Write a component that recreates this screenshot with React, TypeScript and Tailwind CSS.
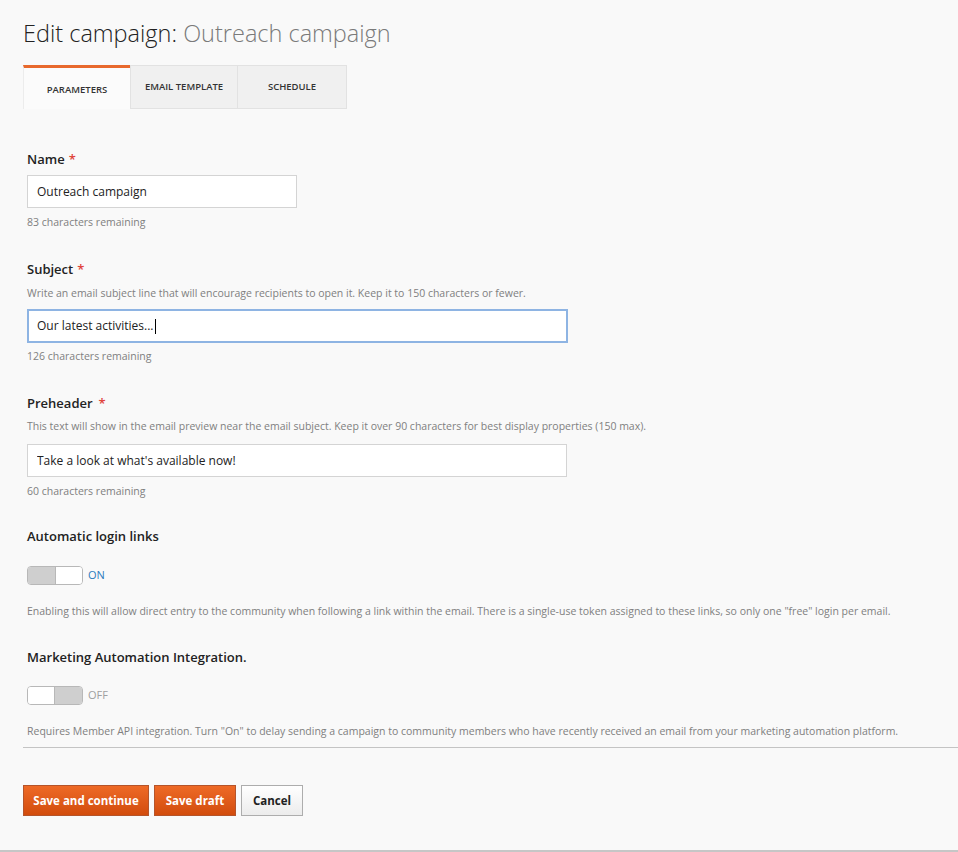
const font = { fontFamily: '"Open Sans", "Noto Sans", sans-serif' }

function Label({ text, gap = false }: { text: string; gap?: boolean }) {
  return (
    <div className="text-[13px] leading-[18px] font-semibold text-[#222]">
      {text}
      {gap ? <span className="ml-[6px] text-[#e0433b]">*</span> : <span className="ml-[4px] text-[#e0433b]">*</span>}
    </div>
  )
}

function Hint({ children, className = '' }: { children: React.ReactNode; className?: string }) {
  return <p className={`text-[10.5px] leading-[15px] text-[#808080] ${className}`}>{children}</p>
}

function Toggle({ on }: { on: boolean }) {
  return (
    <div className="flex items-center gap-[5px]">
      <div className="flex h-[19px] w-[56px] overflow-hidden rounded-[4px] border border-[#b8b8b8]">
        {on ? (
          <>
            <span className="w-[27px] bg-[#cfcfcf]" />
            <span className="flex-1 border-l border-[#b8b8b8] bg-white" />
          </>
        ) : (
          <>
            <span className="w-[27px] border-r border-[#b8b8b8] bg-white" />
            <span className="flex-1 bg-[#cfcfcf]" />
          </>
        )}
      </div>
      <span className={`text-[11px] ${on ? 'text-[#2b7bbd]' : 'text-[#a0a0a0]'}`}>{on ? 'ON' : 'OFF'}</span>
    </div>
  )
}

export default function App() {
  return (
    <div style={font} className="h-[852px] w-[958px] overflow-hidden border-b-2 border-[#c6c6c6] bg-[#f9f9f9]">
      <h1 className="pt-[17px] pl-[23px] text-[23.5px] leading-[32px] font-light text-[#222]">
        Edit campaign: <span className="text-[#7a7a7a]">Outreach campaign</span>
      </h1>

      <div className="mt-[16px] ml-[23px] flex h-[44px] text-[9.5px] font-semibold text-[#333] uppercase">
        <div className="flex w-[107px] items-center justify-center border-t-[3px] border-l border-t-[#e8692d] border-l-[#ececec] bg-[#fbfbfb] pt-[3px]">
          Parameters
        </div>
        <div className="flex w-[108px] items-center justify-center border border-[#e2e2e2] bg-[#f0f0f0]">
          Email template
        </div>
        <div className="flex w-[109px] items-center justify-center border border-l-0 border-[#e2e2e2] bg-[#f0f0f0]">
          Schedule
        </div>
      </div>

      <div className="px-[27px]">
        <div className="mt-[41px]">
          <Label text="Name" />
          <input
            readOnly
            value="Outreach campaign"
            className="mt-[7px] block h-[33px] w-[270px] border border-[#d4d4d4] bg-white px-[9px] text-[12px] text-[#222] outline-none"
          />
          <Hint className="mt-[7px]">83 characters remaining</Hint>
        </div>

        <div className="mt-[30px]">
          <Label text="Subject" />
          <Hint className="mt-[8px]">
            Write an email subject line that will encourage recipients to open it. Keep it to 150 characters or fewer.
          </Hint>
          <div className="mt-[8px] flex h-[34px] w-[541px] items-center border-2 border-[#8eb4e3] bg-white px-[8px] text-[12px] text-[#222]">
            Our latest activities...
            <span className="ml-[1px] h-[15px] w-px bg-black" />
          </div>
          <Hint className="mt-[6px]">126 characters remaining</Hint>
        </div>

        <div className="mt-[30px]">
          <Label text="Preheader" gap />
          <Hint className="mt-[7px]">
            This text will show in the email preview near the email subject. Keep it over 90 characters for best display properties (150 max).
          </Hint>
          <input
            readOnly
            value="Take a look at what's available now!"
            className="mt-[10px] block h-[33px] w-[540px] border border-[#d4d4d4] bg-white px-[9px] text-[12px] text-[#222] outline-none"
          />
          <Hint className="mt-[7px]">60 characters remaining</Hint>
        </div>

        <div className="mt-[28px]">
          <div className="text-[13px] leading-[18px] font-semibold text-[#222]">Automatic login links</div>
          <div className="mt-[21px]">
            <Toggle on />
          </div>
          <Hint className="mt-[19px]">
            Enabling this will allow direct entry to the community when following a link within the email. There is a single-use token assigned to these links, so only one "free" login per email.
          </Hint>
        </div>

        <div className="mt-[29px]">
          <div className="text-[13px] leading-[18px] font-semibold text-[#222]">Marketing Automation Integration.</div>
          <div className="mt-[20px]">
            <Toggle on={false} />
          </div>
          <Hint className="mt-[19px]">
            Requires Member API integration. Turn "On" to delay sending a campaign to community members who have recently received an email from your marketing automation platform.
          </Hint>
        </div>
      </div>

      <div className="mt-[8px] ml-[23px] border-t border-[#c4c4c4]" />

      <div className="mt-[37px] ml-[23px] flex gap-[5px] text-[11.5px] font-bold">
        <button className="h-[31px] w-[126px] border border-[#b5542a] bg-gradient-to-b from-[#ee6a26] to-[#d24c0c] text-white">
          Save and continue
        </button>
        <button className="h-[31px] w-[82px] border border-[#b5542a] bg-gradient-to-b from-[#ee6a26] to-[#d24c0c] text-white">
          Save draft
        </button>
        <button className="h-[31px] w-[62px] border border-[#adadad] bg-gradient-to-b from-white to-[#ececec] text-[#222]">
          Cancel
        </button>
      </div>
    </div>
  )
}
